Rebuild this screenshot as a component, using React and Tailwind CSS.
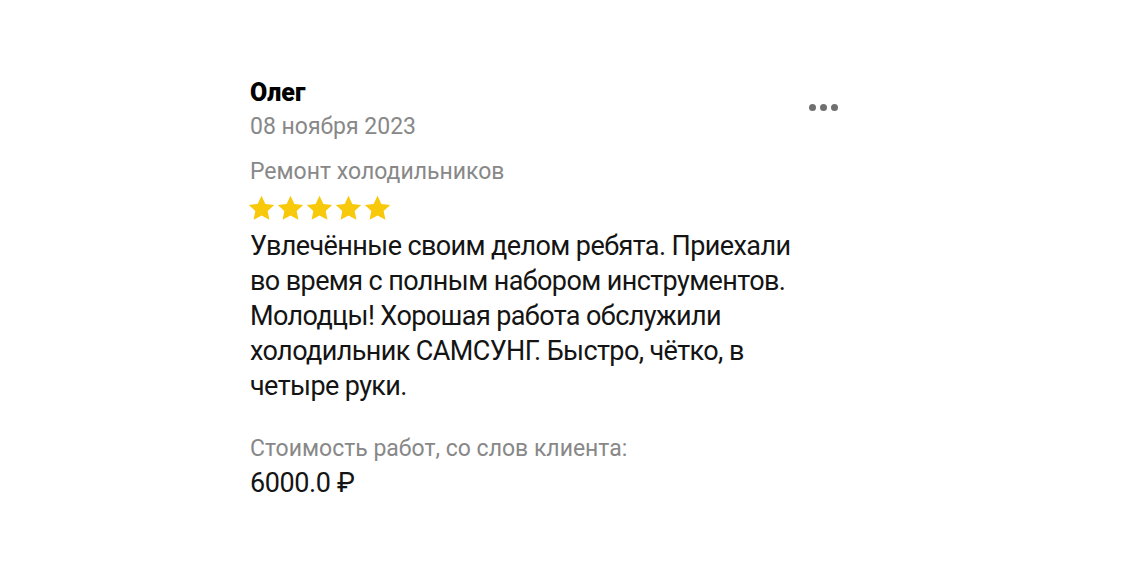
import React from 'react';

const Star = () => (
  <svg viewBox="0 0 24 24" className="w-[29px] h-[29px]" fill="#f8c80a">
    <path d="M12 1.5l3.2 6.7 7.3.9-5.4 5 1.45 7.3L12 17.8l-6.55 3.6 1.45-7.3-5.4-5 7.3-.9z" />
  </svg>
);

const ReviewCard = () => (
  <div className="w-[590px] flex flex-col" style={{ fontFamily: 'Roboto, "Noto Sans", sans-serif' }}>
    <div className="flex justify-between items-start">
      <div className="flex flex-col">
        <h3 className="text-[25px] font-black text-black leading-[30px]">Олег</h3>
        <p className="text-[23px] text-[#888888] leading-[30px] mt-[4px]">08 ноября 2023</p>
      </div>
      <div className="flex gap-[4px] mt-[26px] mr-[2px]">
        <span className="w-[7px] h-[7px] rounded-full bg-[#707070]" />
        <span className="w-[7px] h-[7px] rounded-full bg-[#707070]" />
        <span className="w-[7px] h-[7px] rounded-full bg-[#707070]" />
      </div>
    </div>
    <p className="text-[23px] text-[#888888] leading-[30px] mt-[15px]">Ремонт холодильников</p>
    <div className="flex mt-[7px] -ml-[3px]">
      <Star /><Star /><Star /><Star /><Star />
    </div>
    <p className="text-[27px] tracking-[-0.6px] text-[#141414] leading-[35px] mt-[6px] w-[565px]">
      Увлечённые своим делом ребята. Приехали во время с полным набором инструментов. Молодцы! Хорошая работа обслужили холодильник САМСУНГ. Быстро, чётко, в четыре руки.
    </p>
    <p className="text-[23px] text-[#888888] leading-[30px] mt-[30px]">Стоимость работ, со слов клиента:</p>
    <p className="text-[27px] tracking-[-0.4px] text-[#141414] leading-[32px] mt-[3px]">6000.0 ₽</p>
  </div>
);

export default function App() {
  return (
    <div className="w-[1140px] h-[562px] bg-white pl-[250px] pt-[78px]">
      <ReviewCard />
    </div>
  );
}
